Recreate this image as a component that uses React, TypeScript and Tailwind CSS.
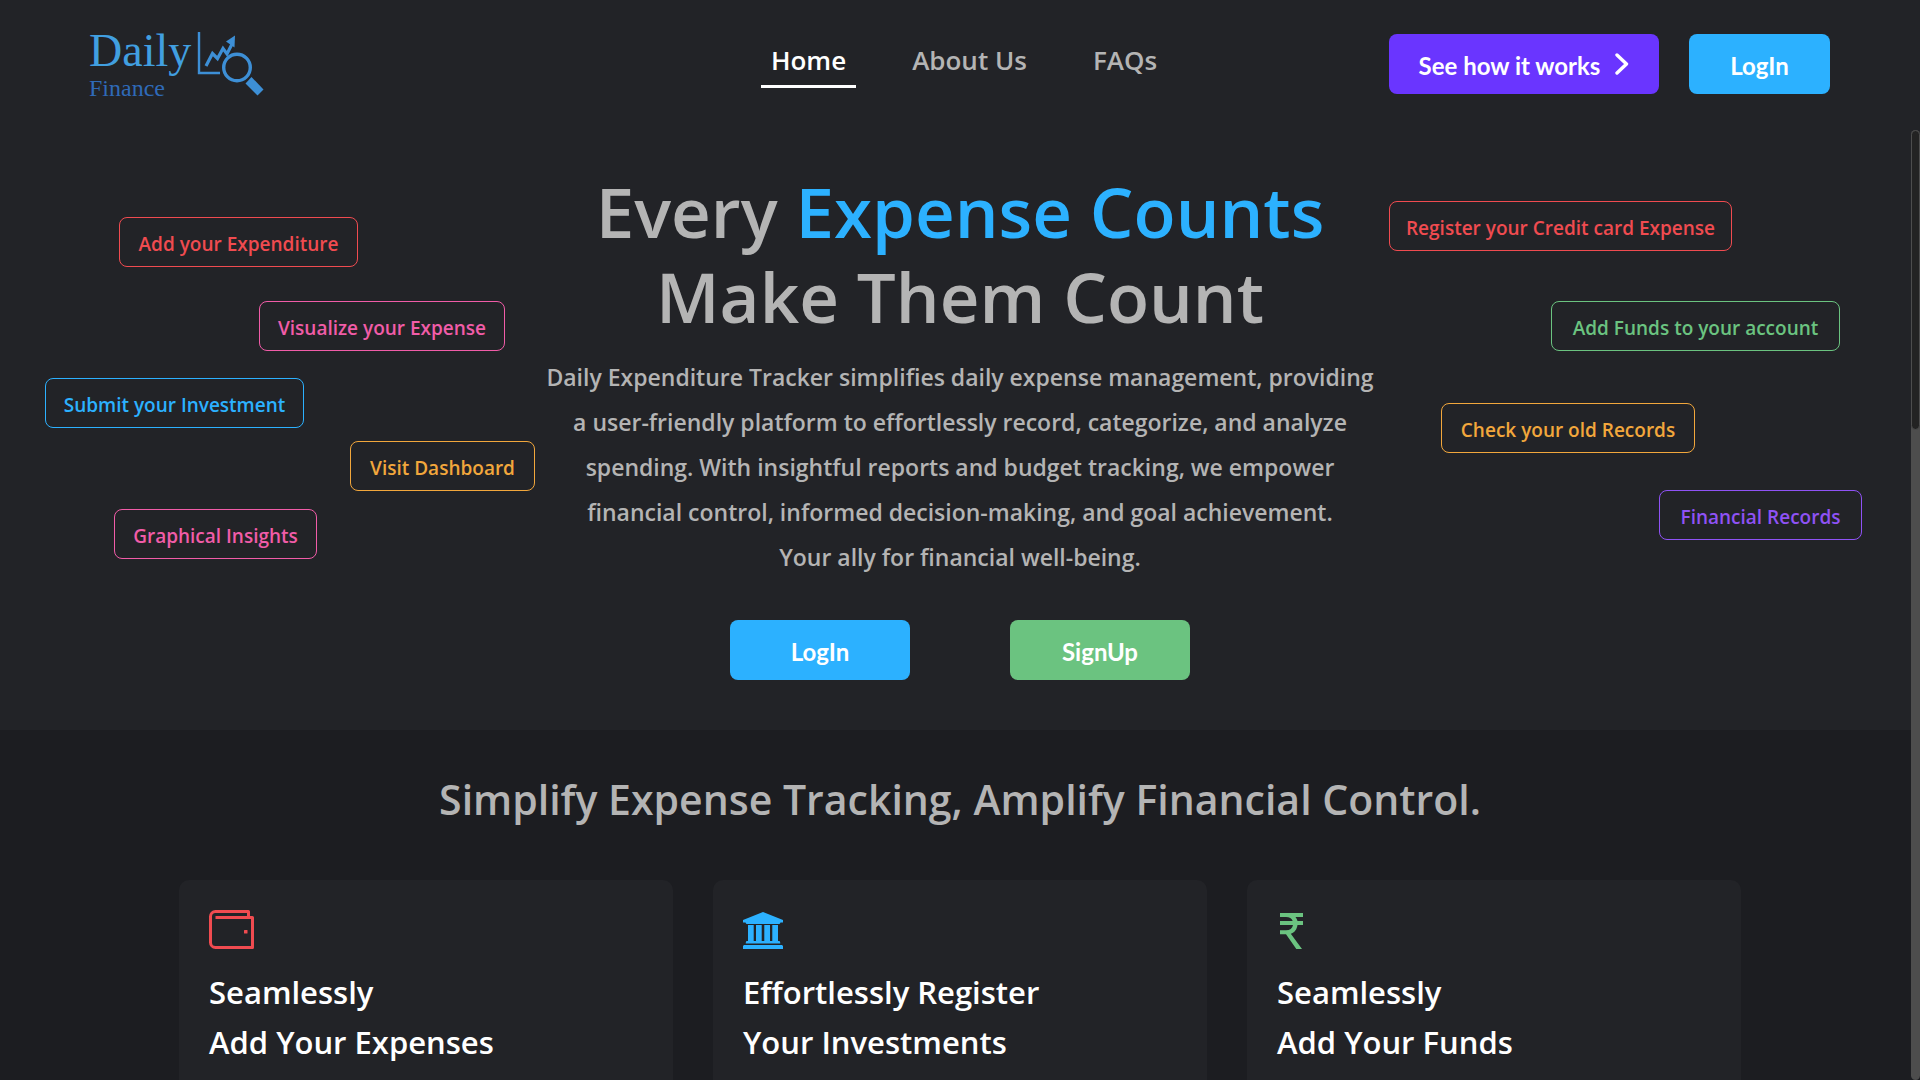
import type { ReactNode } from "react";

function LogoMark() {
  return (
    <svg viewBox="0 0 67 66" className="h-[66px] w-[67px]" fill="none" stroke="#3d8fd6" aria-hidden="true">
      <path d="M2 2V43H23" strokeWidth="2.4" />
      <path d="M9 36L15.500 23.500L20.500 28.500L26 18.500L30 24L35.500 13" strokeWidth="3.2" />
      <path d="M38 5.500L37.500 17.500L29 11.500Z" fill="#3d8fd6" stroke="none" />
      <circle cx="40" cy="37.500" r="13.300" strokeWidth="3.400" />
      <path d="M54.500 47L66.500 59.500L60.500 65.500L48.500 53.500Z" fill="#3d8fd6" stroke="none" />
    </svg>
  );
}

function ChevronIcon() {
  return (
    <svg viewBox="0 0 14 22" className="h-[22px] w-[14px]" fill="none" stroke="currentColor" strokeWidth="3.400" strokeLinecap="round" strokeLinejoin="round" aria-hidden="true">
      <path d="M2 2L11.500 11L2 20" />
    </svg>
  );
}

function WalletIcon() {
  return (
    <svg viewBox="0 0 45 39" className="h-[39px] w-[45px] text-[#f04b50]" fill="none" stroke="currentColor" strokeWidth="3" strokeLinejoin="round" aria-hidden="true">
      <path d="M6.500 7.500H43.500V37.500H6.500A5 5 0 0 1 1.500 32.500V6.500A5 5 0 0 1 6.500 1.500H39.500V7.500" />
      <rect x="35" y="20" width="3.500" height="3.500" rx="0.500" fill="currentColor" stroke="none" />
    </svg>
  );
}

function BankIcon() {
  return (
    <svg viewBox="0 0 40 37" className="h-[37px] w-[40px] text-[#2cb1ff]" fill="currentColor" aria-hidden="true">
      <path d="M20 0L40 8V10.500H37.500Q37 12 36 12H4Q3 12 2.500 10.500H0V8Z" />
      <path d="M5 13H10.700V29H13V13H18.700V29H21.300V13H27V29H29.300V13H35V29H36.500Q37.300 29.500 37.300 31.500H2.700Q2.700 29.500 3.500 29H5Z" />
      <path d="M1 33H39L40 34V37H0V34Z" />
    </svg>
  );
}

function RupeeIcon() {
  return (
    <svg viewBox="0 0 23 36" className="h-[36px] w-[23px] text-[#6bc380]" fill="currentColor" aria-hidden="true">
      <path d="M0 0H23V4H15.500Q17 5.800 17.500 8H23V12H17.500C16.900 16.500 14.500 19.600 10.800 20.700L22 36H16.300L6 21.300H0V17.300H6C10 17.300 12.400 15.500 13 12H0V8H12.700C11.800 5.500 9.500 4 6 4H0Z" />
    </svg>
  );
}

const leftTags = [
  { label: "Add your Expenditure", look: "mt-[87px] ml-[119px] w-[239px] text-[#f04b50]" },
  { label: "Visualize your Expense", look: "mt-[34px] ml-[259px] w-[246px] text-[#f15ca8]" },
  { label: "Submit your Investment", look: "mt-[27px] ml-[45px] w-[259px] text-[#2cb1ff]" },
  { label: "Visit Dashboard", look: "mt-[13px] ml-[350px] w-[185px] text-[#f2a73c]" },
  { label: "Graphical Insights", look: "mt-[18px] ml-[114px] w-[203px] text-[#f15ca8]" },
];

const rightTags = [
  { label: "Register your Credit card Expense", look: "mt-[71px] mr-[188px] w-[343px] text-[#f04b50]" },
  { label: "Add Funds to your account", look: "mt-[50px] mr-[80px] w-[289px] text-[#6bc380]" },
  { label: "Check your old Records", look: "mt-[52px] mr-[225px] w-[254px] text-[#f2a73c]" },
  { label: "Financial Records", look: "mt-[37px] mr-[58px] w-[203px] text-[#8f52f5]" },
];

function Tag({ label, look }: { label: string; look: string }) {
  return (
    <li className={`flex h-[50px] shrink-0 items-center justify-center rounded-lg border border-current pt-1 text-[19px] font-semibold whitespace-nowrap ${look}`}>
      {label}
    </li>
  );
}

function Card({ icon, first, second }: { icon: ReactNode; first: string; second: string }) {
  return (
    <article className="h-[320px] rounded-[10px] bg-[#222327] px-[30px] pt-[29px]">
      <div className="flex h-10 items-end">{icon}</div>
      <h3 className="mt-[18px] text-[31px] leading-[50px] font-semibold text-white">
        {first}
        <br />
        {second}
      </h3>
    </article>
  );
}

const buttonBase = "flex h-[60px] items-center justify-center rounded-lg pt-1 font-['Lato','Open_Sans',sans-serif] text-2xl font-bold text-white";

export default function App() {
  return (
    <div className="relative h-screen overflow-hidden bg-[#1c1d21] font-['Open_Sans',sans-serif] text-[#b4b4b4]">
      <header className="grid h-[130px] grid-cols-[1fr_auto_1fr] items-start bg-[#222327]">
        <a href="#" className="ml-[89px] mt-[30px] flex w-fit gap-1.5 font-['Liberation_Serif',serif]">
          <span className="flex flex-col">
            <span className="text-[46px] leading-[42px] text-[#419fe0]">Daily</span>
            <span className="text-2xl leading-8 text-[#2f6ab8]">Finance</span>
          </span>
          <LogoMark />
        </a>
        <nav className="mt-[35px] ml-2 flex justify-center gap-[46px] text-[26px] leading-[50px] font-semibold">
          <a href="#" className="border-b-[3px] border-white px-2.5 text-white">Home</a>
          <a href="#about" className="px-2.5">About Us</a>
          <a href="#faqs" className="px-2.5">FAQs</a>
        </nav>
        <div className="mt-[34px] mr-[90px] flex justify-end gap-[30px]">
          <button type="button" className={`${buttonBase} w-[270px] gap-[15px] bg-[#6a35ff]`}>
            See how it works
            <span className="-mt-1"><ChevronIcon /></span>
          </button>
          <button type="button" className={`${buttonBase} w-[141px] bg-[#2cb1ff]`}>LogIn</button>
        </div>
      </header>

      <main>
        <section className="grid h-[600px] grid-cols-[1fr_850px_1fr] bg-[#222327]">
          <ul className="flex min-w-0 flex-col items-start">
            {leftTags.map((t) => <Tag key={t.label} {...t} />)}
          </ul>
          <div className="flex flex-col items-center pt-[39px] text-center">
            <h1 className="text-[69px] leading-[85px] font-semibold">
              Every <span className="text-[#2cb1ff]">Expense Counts</span>
              <br />
              Make Them Count
            </h1>
            <p className="mt-4 text-[23px] leading-[45px] font-semibold">
              Daily Expenditure Tracker simplifies daily expense management, providing
              <br />
              a user-friendly platform to effortlessly record, categorize, and analyze
              <br />
              spending. With insightful reports and budget tracking, we empower
              <br />
              financial control, informed decision-making, and goal achievement.
              <br />
              Your ally for financial well-being.
            </p>
            <div className="mt-10 flex gap-[100px]">
              <button type="button" className={`${buttonBase} w-[180px] bg-[#2cb1ff]`}>LogIn</button>
              <button type="button" className={`${buttonBase} w-[180px] bg-[#6bc380]`}>SignUp</button>
            </div>
          </div>
          <ul className="flex min-w-0 flex-col items-end">
            {rightTags.map((t) => <Tag key={t.label} {...t} />)}
          </ul>
        </section>

        <section className="px-[179px] pt-[39px]">
          <h2 className="text-center text-[41px] leading-[60px] font-semibold">
            Simplify Expense Tracking, Amplify Financial Control.
          </h2>
          <div className="mt-[51px] grid grid-cols-3 gap-10">
            <Card icon={<WalletIcon />} first="Seamlessly" second="Add Your Expenses" />
            <Card icon={<BankIcon />} first="Effortlessly Register" second="Your Investments" />
            <Card icon={<span className="ml-[3px]"><RupeeIcon /></span>} first="Seamlessly" second="Add Your Funds" />
          </div>
        </section>
      </main>

      <div className="absolute top-[130px] right-0 bottom-0 w-[9px] rounded-full bg-[#4d4d4d]" aria-hidden="true">
        <div className="h-[300px] rounded-full border border-[#4d4d4d] bg-[#232323]" />
      </div>
    </div>
  );
}
